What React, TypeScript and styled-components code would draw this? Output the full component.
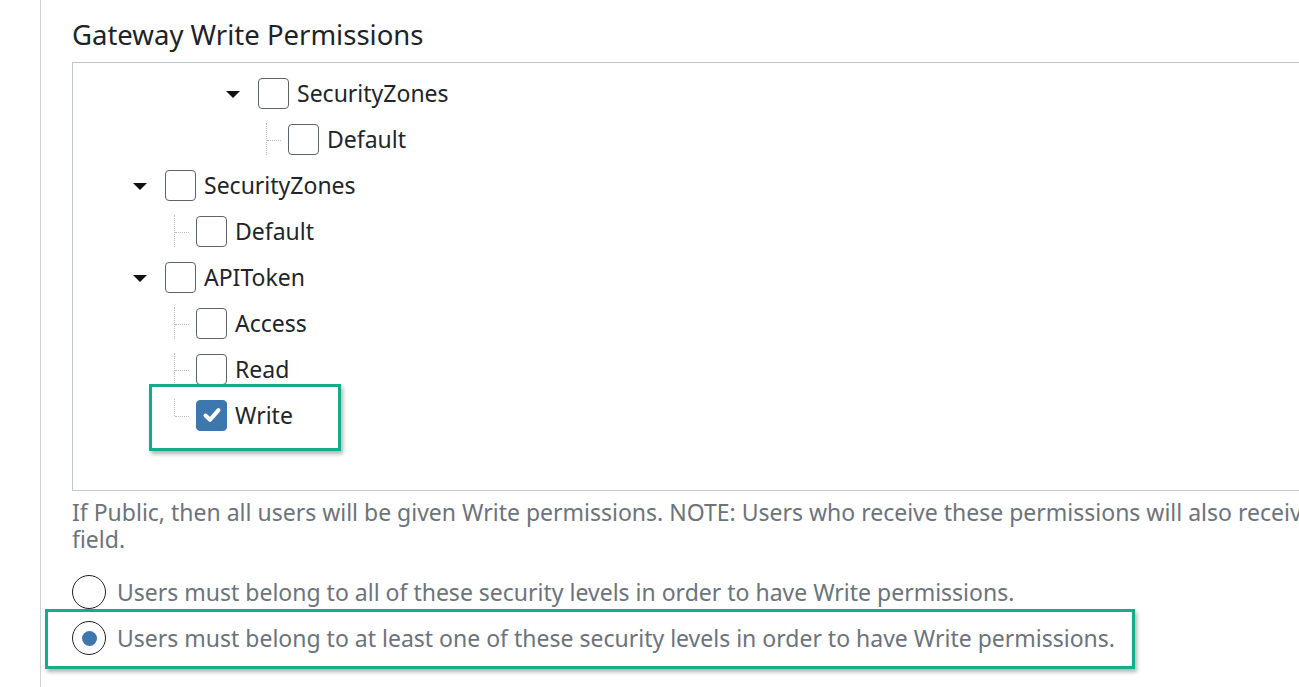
import React from 'react';
import styled, { createGlobalStyle } from 'styled-components';

const GlobalStyle = createGlobalStyle`
	html, body {
		margin: 0;
		padding: 0;
		background: #ffffff;
		font-family: 'Noto Sans', 'Open Sans', sans-serif;
		overflow: hidden;
	}
`;

type TreeNode = {
	label: string;
	indent: number;
	kind: 'parent' | 'child';
	checked?: boolean;
	last?: boolean;
	highlight?: boolean;
};

const nodes: TreeNode[] = [
	{ label: 'SecurityZones', indent: 153, kind: 'parent' },
	{ label: 'Default', indent: 193, kind: 'child' },
	{ label: 'SecurityZones', indent: 60, kind: 'parent' },
	{ label: 'Default', indent: 101, kind: 'child' },
	{ label: 'APIToken', indent: 60, kind: 'parent' },
	{ label: 'Access', indent: 101, kind: 'child' },
	{ label: 'Read', indent: 101, kind: 'child' },
	{ label: 'Write', indent: 101, kind: 'child', checked: true, last: true, highlight: true },
];

export default function App() {
	return (
		<>
			<GlobalStyle />
			<Page>
				<Title>Gateway Write Permissions</Title>
				<TreeBox>
					{nodes.map((node, i) => (
						<TreeRow key={i} $indent={node.indent}>
							{node.kind === 'parent' ? <Caret /> : <Connector $last={!!node.last} />}
							<Checkbox $checked={!!node.checked}>
								{node.checked && (
									<svg width="22" height="22" viewBox="0 0 22 22">
										<path
											d="M4.5 11.5 L9 15.8 L17.5 6.2"
											fill="none"
											stroke="#ffffff"
											strokeWidth="4"
											strokeLinecap="round"
											strokeLinejoin="round"
										/>
									</svg>
								)}
							</Checkbox>
							<Label>{node.label}</Label>
							{node.highlight && <WriteHighlight />}
						</TreeRow>
					))}
				</TreeBox>
				<HelpText>
					If Public, then all users will be given Write permissions. NOTE: Users who receive these permissions will also receive Read permissions for this
					field.
				</HelpText>
				<RadioGroup>
					<RadioRow>
						<Radio $selected={false} />
						<RadioLabel>Users must belong to all of these security levels in order to have Write permissions.</RadioLabel>
					</RadioRow>
					<RadioRow>
						<Radio $selected={true} />
						<RadioLabel>Users must belong to at least one of these security levels in order to have Write permissions.</RadioLabel>
						<RadioHighlight />
					</RadioRow>
				</RadioGroup>
			</Page>
		</>
	);
}

const Page = styled.div`
	margin-left: 40px;
	min-height: 100vh;
	border-left: 1px solid #d2d4d6;
	padding: 18px 0 0 31px;
	box-sizing: border-box;
	width: 1700px;
`;

const Title = styled.h2`
	margin: 0 0 10px 0;
	font-size: 27.5px;
	line-height: 34px;
	font-weight: 400;
	color: #1f2327;
`;

const TreeBox = styled.div`
	border: 1px solid #c3c8cd;
	padding: 7px 0 52px 0;
	width: 1540px;
`;

const TreeRow = styled.div<{ $indent: number }>`
	position: relative;
	display: flex;
	align-items: center;
	height: 46px;
	padding-left: ${({ $indent }) => $indent}px;
`;

const Caret = styled.span`
	width: 0;
	height: 0;
	border-left: 7px solid transparent;
	border-right: 7px solid transparent;
	border-top: 7px solid #111111;
	margin-right: 18px;
	margin-top: 2px;
`;

const Connector = styled.span<{ $last: boolean }>`
	position: relative;
	width: 22px;
	height: 32px;
	flex-shrink: 0;

	&::before {
		content: '';
		position: absolute;
		left: 0;
		top: 0;
		height: ${({ $last }) => ($last ? '17px' : '32px')};
		border-left: 1px dotted #bdbdbd;
	}

	&::after {
		content: '';
		position: absolute;
		left: 1px;
		top: 17px;
		width: 14px;
		border-top: 1px dotted #bdbdbd;
	}
`;

const Checkbox = styled.span<{ $checked: boolean }>`
	display: flex;
	align-items: center;
	justify-content: center;
	width: 31px;
	height: 31px;
	box-sizing: border-box;
	border-radius: 4px;
	border: 1px solid ${({ $checked }) => ($checked ? '#3e77ae' : '#5f6468')};
	background: ${({ $checked }) => ($checked ? '#3e77ae' : '#ffffff')};
	flex-shrink: 0;
`;

const Label = styled.span`
	margin-left: 8px;
	font-size: 23px;
	color: #212529;
	white-space: nowrap;
`;

const WriteHighlight = styled.span`
	position: absolute;
	left: 76px;
	top: -8px;
	width: 192px;
	height: 67px;
	box-sizing: border-box;
	border: 3px solid #14ac8b;
	box-shadow: 2px 3px 4px rgba(0, 0, 0, 0.3);
	pointer-events: none;
`;

const HelpText = styled.p`
	margin: 8px 0 0 0;
	font-size: 23px;
	line-height: 27px;
	color: #6c737a;
	width: 1545px;
`;

const RadioGroup = styled.div`
	margin-top: 16px;
	display: flex;
	flex-direction: column;
`;

const RadioRow = styled.div`
	position: relative;
	display: flex;
	align-items: center;
	height: 46px;
`;

const Radio = styled.span<{ $selected: boolean }>`
	position: relative;
	width: 34px;
	height: 34px;
	box-sizing: border-box;
	border-radius: 50%;
	border: 1.5px solid #222222;
	background: #ffffff;
	flex-shrink: 0;

	&::after {
		content: '';
		display: ${({ $selected }) => ($selected ? 'block' : 'none')};
		position: absolute;
		left: 50%;
		top: 50%;
		width: 15px;
		height: 15px;
		margin: -7.5px 0 0 -7.5px;
		border-radius: 50%;
		background: #3e77ae;
	}
`;

const RadioLabel = styled.span`
	margin-left: 11px;
	font-size: 23px;
	color: #6c737a;
	white-space: nowrap;
`;

const RadioHighlight = styled.span`
	position: absolute;
	left: -27px;
	top: -6px;
	width: 1090px;
	height: 60px;
	box-sizing: border-box;
	border: 3px solid #14ac8b;
	box-shadow: 2px 3px 4px rgba(0, 0, 0, 0.3);
	pointer-events: none;
`;
